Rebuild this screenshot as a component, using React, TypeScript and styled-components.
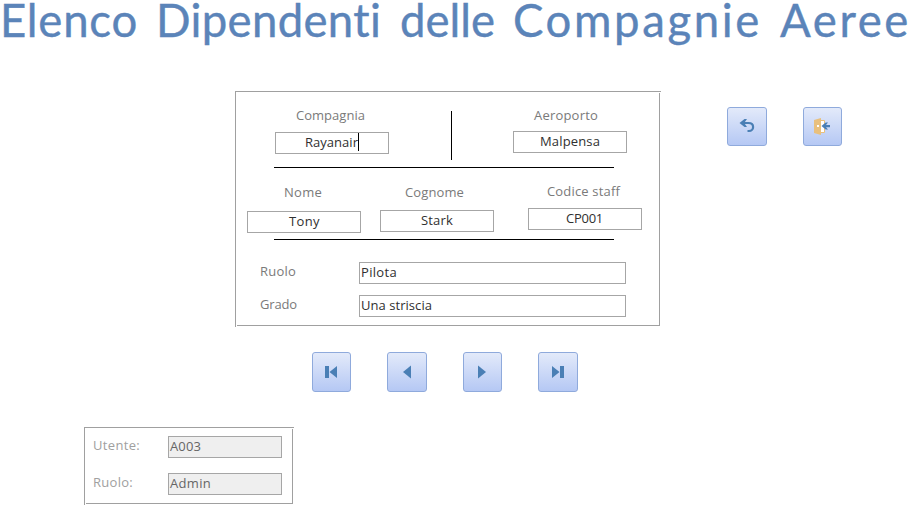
import React, { useLayoutEffect, useRef, useState } from "react";
import styled, { createGlobalStyle } from "styled-components";

const GlobalStyle = createGlobalStyle`
  * { box-sizing: border-box; }
  body {
    margin: 0;
    background: #fff;
    font-family: "Open Sans", "Noto Sans", sans-serif;
    font-size: 13px;
  }
`;

const Page = styled.main`
  width: 912px;
  height: 507px;
`;

const Title = styled.h1`
  display: flex;
  gap: 18px;
  height: 91px;
  margin: 0;
  font: 400 45.5px/39px Lato, sans-serif;
  color: #5b84b9;
  white-space: nowrap;
  -webkit-text-stroke: 0.4px #5b84b9;
`;

const FitBox = styled.span<{ $w: number }>`
  display: block;
  flex: none;
  width: ${(p) => p.$w}px;
  white-space: pre;
  text-align: left;
`;

/* Spreads the letters of a text evenly over the given width. */
function Fit({ text, width }: { text: string; width: number }) {
  const ref = useRef<HTMLSpanElement>(null);
  const [spacing, setSpacing] = useState(0);
  useLayoutEffect(() => {
    if (ref.current) {
      setSpacing((width - ref.current.getBoundingClientRect().width) / text.length);
    }
  }, [text, width]);
  return (
    <FitBox $w={width}>
      <span ref={ref} style={{ letterSpacing: spacing }}>{text}</span>
    </FitBox>
  );
}

const Middle = styled.div`
  display: flex;
  align-items: flex-start;
  height: 261px;
  padding-left: 235px;
`;

const Frame = styled.section<{ $w: number; $h: number }>`
  display: flex;
  flex: none;
  width: ${(p) => p.$w}px;
  height: ${(p) => p.$h}px;
  border: solid #a0a0a0;
  border-width: 1px 0 0 1px;
`;

const FrameBody = styled.div`
  flex: 1;
  margin: 1px;
  border: solid #a0a0a0;
  border-width: 0 1px 1px 0;
`;

const Row = styled.div<{ $h: number; $left: number; $top?: number }>`
  display: flex;
  align-items: flex-start;
  height: ${(p) => p.$h}px;
  padding-left: ${(p) => p.$left}px;
  padding-top: ${(p) => p.$top ?? 0}px;
`;

const Field = styled.div<{ $drop?: number; $after?: number }>`
  flex: none;
  width: 114px;
  margin-top: ${(p) => p.$drop ?? 0}px;
  margin-right: ${(p) => p.$after ?? 0}px;
`;

const Label = styled.div<{ $indent?: number; $gap?: number; $light?: boolean }>`
  display: flex;
  height: 18px;
  line-height: 18px;
  padding-left: ${(p) => p.$indent ?? 0}px;
  margin-bottom: ${(p) => p.$gap ?? 0}px;
  color: ${(p) => (p.$light ? "#a0a0a0" : "#7a7a7a")};
`;

const SideLabel = styled(Label)<{ $w: number }>`
  width: ${(p) => p.$w}px;
  flex: none;
`;

const Input = styled.div<{ $w?: number; $indent?: number; $locked?: boolean }>`
  display: flex;
  align-items: center;
  flex: none;
  width: ${(p) => p.$w ?? 114}px;
  height: 22px;
  padding: 0 0 2px ${(p) => p.$indent ?? 2}px;
  border: 1px solid #a6a6a6;
  line-height: 18px;
  background: ${(p) => (p.$locked ? "#efefef" : "#fff")};
  color: ${(p) => (p.$locked ? "#666" : "#303030")};
`;

const Caret = styled.i`
  width: 1px;
  height: 18px;
  background: #000;
`;

const VerticalRule = styled.div`
  flex: none;
  width: 1px;
  height: 49px;
  margin: 6px 61px 0 62px;
  background: #000;
`;

const Rule = styled.div`
  width: 340px;
  height: 1px;
  margin-left: 37px;
  background: #000;
`;

const Actions = styled.div`
  display: flex;
  gap: 36px;
  margin: 16px 0 0 66px;
`;

const Navigation = styled.nav`
  display: flex;
  gap: 36px;
  height: 75px;
  padding-left: 312px;
`;

const IconButton = styled.button<{ $w?: number; $h?: number }>`
  display: flex;
  align-items: center;
  justify-content: center;
  flex: none;
  width: ${(p) => p.$w ?? 39}px;
  height: ${(p) => p.$h ?? 40}px;
  padding: 0;
  border: 1px solid #8faadc;
  border-radius: 3px;
  background: linear-gradient(#e3eafa, #b5c8f4);

  svg { display: block; }
`;

const Account = styled.div`
  padding-left: 84px;
`;

const BLUE = "#4a7fb5";

const Undo = () => (
  <svg width="38" height="37" viewBox="0 0 38 37">
    <path d="M14 15h6.5c3 0 4.6 1.800 4.600 4s-1.600 4-4.100 4h-1.500" fill="none" stroke={BLUE} strokeWidth="2.200" />
    <path d="M11.500 15l5-4h2.500l-2.800 4 2.800 4h-2.500z" fill={BLUE} />
  </svg>
);

const Exit = () => (
  <svg width="37" height="37" viewBox="0 0 37 37">
    <path d="M16 12.5h4.5v12H16z" fill="#fff" stroke="#e9c07d" />
    <path d="M10 12l7-2v17l-7-2z" fill="#e9c07d" />
    <rect x="13" y="17" width="2" height="2" fill="#fff" />
    <path d="M17.5 18l4.200-3.500h2.300l-2 2.500h4v2.200h-4l2 2.300h-2.300z" fill={BLUE} />
  </svg>
);

const First = () => (
  <svg width="37" height="38" viewBox="0 0 37 38" fill={BLUE}>
    <path d="M12 13h4v12h-4zM16.5 19l7.5-6v12z" />
  </svg>
);

const Previous = () => (
  <svg width="38" height="38" viewBox="0 0 38 38" fill={BLUE}>
    <path d="M15 19l8-6.5v13z" />
  </svg>
);

const Next = () => (
  <svg width="37" height="38" viewBox="0 0 37 38" fill={BLUE}>
    <path d="M22 19l-8-6.5v13z" />
  </svg>
);

const Last = () => (
  <svg width="38" height="38" viewBox="0 0 38 38" fill={BLUE}>
    <path d="M21 13h4v12h-4zM20.5 19L13 13v12z" />
  </svg>
);

export default function App() {
  return (
    <Page>
      <GlobalStyle />
      <Title>
        <Fit text="Elenco" width={138} />
        <Fit text="Dipendenti" width={226} />
        <Fit text="delle" width={95} />
        <Fit text="Compagnie" width={249} />
        <Fit text="Aeree" width={131} />
      </Title>
      <Middle>
        <Frame $w={426} $h={236}>
          <FrameBody>
            <Row $h={74} $left={38} $top={12}>
              <Field $drop={1}>
                <Label $indent={21} $gap={8}><Fit text="Compagnia" width={69} /></Label>
                <Input $indent={29}><Fit text="Rayanair" width={53} /><Caret /></Input>
              </Field>
              <VerticalRule />
              <Field $drop={1}>
                <Label $indent={21} $gap={7}><Fit text="Aeroporto" width={64} /></Label>
                <Input $indent={26}><Fit text="Malpensa" width={60} /></Input>
              </Field>
            </Row>
            <Rule />
            <Row $h={71} $left={10} $top={14}>
              <Field $drop={1} $after={19}>
                <Label $indent={37} $gap={10}><Fit text="Nome" width={38} /></Label>
                <Input $indent={41}><Fit text="Tony" width={31} /></Input>
              </Field>
              <Field $drop={1} $after={34}>
                <Label $indent={25} $gap={9}><Fit text="Cognome" width={59} /></Label>
                <Input $indent={40}><Fit text="Stark" width={32} /></Input>
              </Field>
              <Field>
                <Label $indent={19} $gap={8}><Fit text="Codice staff" width={73} /></Label>
                <Input $indent={37}><Fit text="CP001" width={37} /></Input>
              </Field>
            </Row>
            <Rule />
            <Row $h={55} $left={23} $top={22}>
              <SideLabel $w={99}><Fit text="Ruolo" width={36} /></SideLabel>
              <Input $w={267} $indent={1}><Fit text="Pilota" width={36} /></Input>
            </Row>
            <Row $h={30} $left={23}>
              <SideLabel $w={99}><Fit text="Grado" width={37} /></SideLabel>
              <Input $w={267} $indent={1}><Fit text="Una striscia" width={71} /></Input>
            </Row>
          </FrameBody>
        </Frame>
        <Actions>
          <IconButton $w={40} $h={39} aria-label="Annulla"><Undo /></IconButton>
          <IconButton $h={39} aria-label="Esci"><Exit /></IconButton>
        </Actions>
      </Middle>
      <Navigation>
        <IconButton aria-label="Primo"><First /></IconButton>
        <IconButton $w={40} aria-label="Precedente"><Previous /></IconButton>
        <IconButton aria-label="Successivo"><Next /></IconButton>
        <IconButton $w={40} aria-label="Ultimo"><Last /></IconButton>
      </Navigation>
      <Account>
        <Frame $w={210} $h={78}>
          <FrameBody>
            <Row $h={44} $left={7} $top={7}>
              <SideLabel $w={75} $light><Fit text="Utente:" width={47} /></SideLabel>
              <Input $locked $indent={1}><Fit text="A003" width={31} /></Input>
            </Row>
            <Row $h={30} $left={7}>
              <SideLabel $w={75} $light><Fit text="Ruolo:" width={40} /></SideLabel>
              <Input $locked $indent={1}><Fit text="Admin" width={41} /></Input>
            </Row>
          </FrameBody>
        </Frame>
      </Account>
    </Page>
  );
}
